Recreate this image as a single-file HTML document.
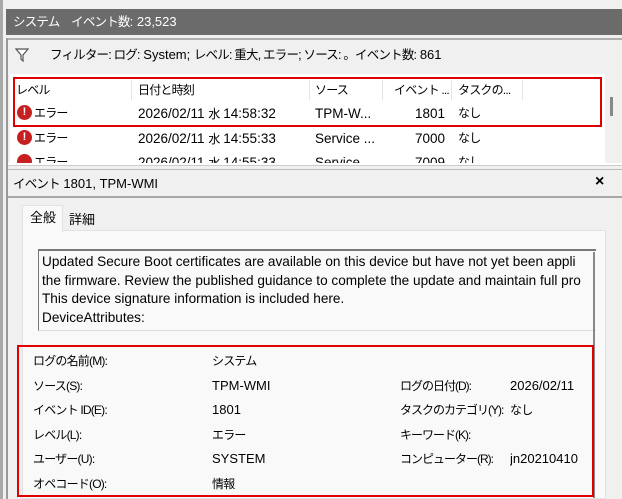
<!DOCTYPE html>
<html><head><meta charset="utf-8"><style>
*{margin:0;padding:0;box-sizing:border-box}
body{width:622px;height:499px;overflow:hidden;background:#f0f0f0;font-family:"Liberation Sans","Noto Sans CJK JP",sans-serif;font-size:13px;line-height:15px;color:#000;position:relative}
.a{position:absolute;white-space:nowrap}
.j{letter-spacing:-0.8px;font-size:12px}
.ic{width:15px;height:15px;border-radius:50%;background:#c62020;color:#fff;font-weight:bold;font-size:11px;text-align:center;line-height:15px}
</style></head><body>
<div class="a" style="left:0;top:0;width:3px;height:499px;background:#a8a8a8"></div>
<div class="a" style="left:6px;top:9px;width:616px;height:26px;background:#6b6b6b"></div>
<div class="a" style="left:13px;top:14px;color:#fff;font-size:13px"><span class="j" style="font-size:12.5px">システム　イベント数</span>: 23,523</div>
<div class="a" style="left:6px;top:38px;width:616px;height:461px;border-left:2px solid #9a9a9a"></div>
<div class="a" style="left:8px;top:38px;width:614px;height:2px;background:#b0b0b0"></div>
<svg class="a" style="left:15px;top:48px" width="14" height="14" viewBox="0 0 14 14"><path d="M1 1h12L8 7v6L6 11V7z" fill="#fff" stroke="#555" stroke-width="1.2"/></svg>
<div class="a" style="left:50px;top:47px;font-size:13px"><span class="j" style="font-size:12.5px">フィルター: ログ:</span> System; <span class="j" style="font-size:12.5px">レベル: 重大, エラー; ソース: 。イベント数:</span> 861</div>
<div class="a" style="left:10px;top:74px;width:595px;height:89px;background:#fff"></div>
<div class="a" style="left:605px;top:74px;width:17px;height:89px;background:#f0f0f0"></div>
<div class="a" style="left:610px;top:97px;width:3px;height:19px;background:#888"></div>
<div class="a" style="left:13px;top:77px;width:589px;height:50px;border:2px solid #e00000"></div>
<div class="a j" style="left:16px;top:83px">レベル</div>
<div class="a" style="left:131px;top:80px;width:1px;height:20px;background:#e5e5e5"></div>
<div class="a j" style="left:138px;top:83px">日付と時刻</div>
<div class="a" style="left:309px;top:80px;width:1px;height:20px;background:#e5e5e5"></div>
<div class="a j" style="left:315px;top:83px">ソース</div>
<div class="a" style="left:382px;top:80px;width:1px;height:20px;background:#e5e5e5"></div>
<div class="a j" style="left:394px;top:83px">イベント ...</div>
<div class="a" style="left:451px;top:80px;width:1px;height:20px;background:#e5e5e5"></div>
<div class="a j" style="left:458px;top:83px">タスクの...</div>
<div class="a" style="left:522px;top:80px;width:1px;height:20px;background:#e5e5e5"></div>
<div class="a ic" style="left:17px;top:105px">!</div>
<div class="a j" style="left:34px;top:106px">エラー</div>
<div class="a" style="left:138px;top:106px;font-size:13.5px">2026/02/11 <span class="j">水</span> 14:58:32</div>
<div class="a" style="left:315px;top:106px;font-size:13.5px">TPM-W...</div>
<div class="a" style="left:405px;top:106px;width:40px;text-align:right;font-size:13.5px">1801</div>
<div class="a j" style="left:458px;top:106px">なし</div>
<div class="a ic" style="left:17px;top:130px">!</div>
<div class="a j" style="left:34px;top:131px">エラー</div>
<div class="a" style="left:138px;top:131px;font-size:13.5px">2026/02/11 <span class="j">水</span> 14:55:33</div>
<div class="a" style="left:315px;top:131px;font-size:13.5px">Service ...</div>
<div class="a" style="left:405px;top:131px;width:40px;text-align:right;font-size:13.5px">7000</div>
<div class="a j" style="left:458px;top:131px">なし</div>
<div class="a" style="left:10px;top:149px;width:595px;height:14px;overflow:hidden">
<div class="a ic" style="left:7px;top:5px"></div>
<div class="a j" style="left:24px;top:6px">エラー</div>
<div class="a" style="left:128px;top:6px;font-size:13.5px">2026/02/11 <span class="j">水</span> 14:55:33</div>
<div class="a" style="left:305px;top:6px;font-size:13.5px">Service ...</div>
<div class="a" style="left:395px;top:6px;width:40px;text-align:right;font-size:13.5px">7009</div>
<div class="a j" style="left:448px;top:6px">なし</div></div>
<div class="a" style="left:8px;top:163px;width:614px;height:3px;background:#fff;border-bottom:1px solid #ccc"></div>
<div class="a" style="left:8px;top:169px;width:614px;height:1px;background:#bbb"></div>
<div class="a" style="left:13px;top:176px;font-size:13px"><span class="j" style="font-size:12.5px">イベント</span> 1801, TPM-WMI</div>
<div class="a" style="left:595px;top:174px;font-size:16px;font-weight:bold">×</div>
<div class="a" style="left:8px;top:196px;width:614px;height:2px;background:#a8a8a8"></div>
<div class="a" style="left:22px;top:230px;width:584px;height:269px;background:#f9f9f9;border:1px solid #e2e2e2"></div>
<div class="a" style="left:22px;top:205px;width:41px;height:27px;background:#f9f9f9;border:1px solid #e2e2e2;border-bottom:none"></div>
<div class="a" style="left:30px;top:210px;font-size:13px">全般</div>
<div class="a" style="left:69px;top:212px;font-size:13px">詳細</div>
<div class="a" style="left:38px;top:249px;width:558px;height:82px;border-left:1px solid #777;border-top:2px solid #777;border-bottom:1px solid #ddd"></div>
<div class="a" style="left:593px;top:252px;width:2px;height:246px;background:#888"></div>
<div class="a" style="left:42px;top:253px;font-size:13.6px;line-height:18.6px;width:550px;overflow:hidden">Updated Secure Boot certificates are available on this device but have not yet been appli<br>the firmware. Review the published guidance to complete the update and maintain full pro<br>This device signature information is included here.<br>DeviceAttributes:</div>
<div class="a" style="left:17px;top:345px;width:577px;height:152px;border:2px solid #e00000"></div>
<div class="a j" style="left:33px;top:349px;line-height:24.6px">ログの名前(M):<br>ソース(S):<br>イベント ID(E):<br>レベル(L):<br>ユーザー(U):<br>オペコード(O):</div>
<div class="a" style="left:212px;top:349px;line-height:24.6px;font-size:13px"><span class="j">システム</span><br>TPM-WMI<br>1801<br><span class="j">エラー</span><br>SYSTEM<br><span class="j">情報</span></div>
<div class="a j" style="left:400px;top:373.6px;line-height:24.6px;letter-spacing:-1px">ログの日付(D):<br>タスクのカテゴリ(Y):<br>キーワード(K):<br>コンピューター(R):</div>
<div class="a" style="left:510px;top:373.6px;line-height:24.6px;width:74px;overflow:hidden;font-size:13px">2026/02/11<br><span class="j">なし</span><br><br>jn20210410</div>
</body></html>
